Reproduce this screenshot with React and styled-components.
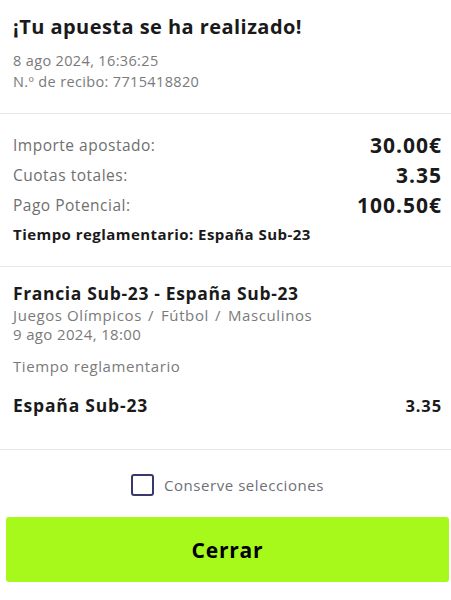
import styled, { createGlobalStyle } from 'styled-components';

const GlobalStyle = createGlobalStyle`
  body {
    margin: 0;
    background: #fff;
    font-family: "Open Sans", "Liberation Sans", sans-serif;
    color: #1a1a1a;
  }
`;

const summary = [
  { label: 'Importe apostado:', value: '30.00€' },
  { label: 'Cuotas totales:', value: '3.35' },
  { label: 'Pago Potencial:', value: '100.50€' },
];

const path = ['Juegos Olímpicos', 'Fútbol', 'Masculinos'];

export default function App() {
  return (
    <Receipt>
      <GlobalStyle />
      <Section $top={14} $bottom={21}>
        <Title>¡Tu apuesta se ha realizado!</Title>
        <Meta>8 ago 2024, 16:36:25</Meta>
        <Meta>N.º de recibo: 7715418820</Meta>
      </Section>

      <Section $top={16} $bottom={22}>
        {summary.map((row) => (
          <SummaryRow key={row.label}>
            <Label>{row.label}</Label>
            <Amount>{row.value}</Amount>
          </SummaryRow>
        ))}
        <Outcome>Tiempo reglamentario: España Sub-23</Outcome>
      </Section>

      <Section $top={15} $bottom={32}>
        <EventName>Francia Sub-23 - España Sub-23</EventName>
        <Breadcrumb>
          {path.map((part, i) => (
            <Crumb key={part} $first={i === 0}>
              {part}
            </Crumb>
          ))}
        </Breadcrumb>
        <EventInfo>9 ago 2024, 18:00</EventInfo>
        <Market>Tiempo reglamentario</Market>
        <SelectionRow>
          <SelectionName>España Sub-23</SelectionName>
          <SelectionOdds>3.35</SelectionOdds>
        </SelectionRow>
      </Section>

      <Footer>
        <KeepRow>
          <Checkbox type="checkbox" />
          <KeepText>Conserve selecciones</KeepText>
        </KeepRow>
        <CloseButton>Cerrar</CloseButton>
      </Footer>
    </Receipt>
  );
}

const Receipt = styled.div`
  width: 451px;
  display: flex;
  flex-direction: column;
`;

const Section = styled.section`
  padding: ${(p) => p.$top}px 10px ${(p) => p.$bottom}px 13px;
  border-bottom: 1px solid #e8e8e8;
  display: flex;
  flex-direction: column;
`;

const Title = styled.h1`
  margin: 0 0 10px;
  font-size: 20px;
  line-height: 26px;
  font-weight: 700;
  letter-spacing: 0.45px;
  color: #1a1a1a;
`;

const Meta = styled.div`
  font-size: 14.5px;
  line-height: 21px;
  letter-spacing: 0.35px;
  color: #7a7a7a;
`;

const SummaryRow = styled.div`
  height: 30px;
  display: flex;
  align-items: center;
  justify-content: space-between;
`;

const Label = styled.span`
  font-size: 15.5px;
  letter-spacing: 0.5px;
  color: #6f6f6f;
`;

const Amount = styled.span`
  font-size: 21px;
  font-weight: 700;
  letter-spacing: 1px;
  margin-right: -1px;
  color: #1a1a1a;
`;

const Outcome = styled.div`
  margin-top: 4px;
  font-size: 15px;
  line-height: 20px;
  font-weight: 700;
  letter-spacing: 0.45px;
`;

const EventName = styled.div`
  margin-bottom: 2px;
  font-size: 17.5px;
  line-height: 22px;
  font-weight: 700;
  letter-spacing: 0.65px;
`;

const EventInfo = styled.div`
  font-size: 15px;
  line-height: 19px;
  letter-spacing: 0.35px;
  color: #7a7a7a;
`;

const Breadcrumb = styled.div`
  display: flex;
  height: 19px;
  font-size: 15px;
  line-height: 19px;
  letter-spacing: 0.6px;
  color: #7a7a7a;
`;

const Crumb = styled.span`
  &::before {
    content: ${(p) => (p.$first ? 'none' : '"/"')};
    margin: 0 7px 0 6px;
  }
`;

const Market = styled.div`
  margin-top: 12px;
  font-size: 15px;
  line-height: 20px;
  letter-spacing: 0.6px;
  color: #7a7a7a;
`;

const SelectionRow = styled.div`
  margin-top: 17px;
  height: 24px;
  display: flex;
  align-items: center;
  justify-content: space-between;
`;

const SelectionName = styled.span`
  font-size: 17.5px;
  font-weight: 700;
  letter-spacing: 0.8px;
`;

const SelectionOdds = styled.span`
  font-size: 16.5px;
  font-weight: 700;
  letter-spacing: 0.9px;
  margin-right: -1px;
`;

const Footer = styled.div`
  padding: 24px 2px 0 6px;
  display: flex;
  flex-direction: column;
  gap: 21px;
`;

const KeepRow = styled.label`
  display: flex;
  align-items: center;
  justify-content: center;
  gap: 10px;
  height: 22px;
`;

const Checkbox = styled.input`
  appearance: none;
  margin: 0;
  width: 23px;
  height: 22px;
  border: 2px solid #38386b;
  border-radius: 3px;
  background: #fff;
`;

const KeepText = styled.span`
  font-size: 15px;
  letter-spacing: 0.55px;
  color: #6f6f78;
`;

const CloseButton = styled.button`
  height: 65px;
  border: none;
  border-radius: 3px;
  background: #a6f91b;
  color: #000;
  font-family: inherit;
  font-size: 21px;
  font-weight: 700;
  letter-spacing: 0.8px;
  cursor: pointer;
`;
